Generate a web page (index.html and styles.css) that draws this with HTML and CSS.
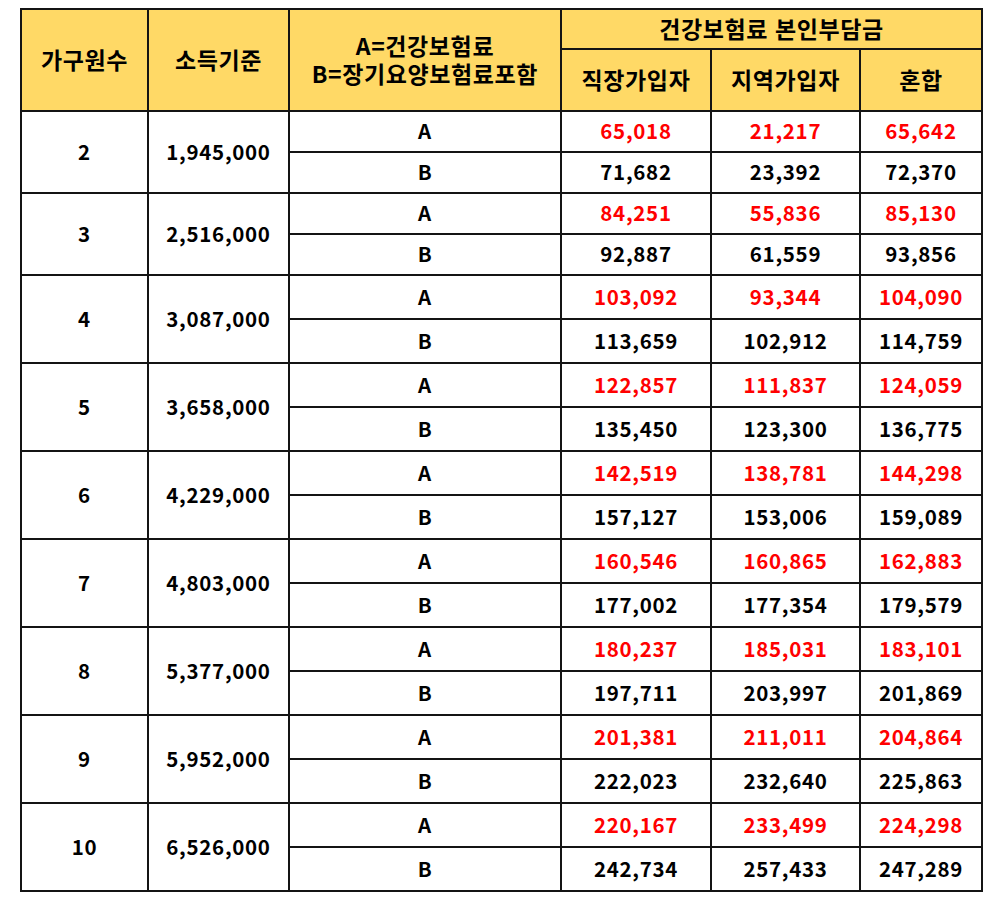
FILE: index.html
```html
<!DOCTYPE html>
<html lang="ko">
<head>
<meta charset="utf-8">
<link rel="stylesheet" href="styles.css">
</head>
<body>
<table class="tbl">
  <colgroup>
    <col class="c1"><col class="c2"><col class="c3"><col class="c4"><col class="c5"><col class="c6">
  </colgroup>
  <thead>
    <tr class="h1">
      <th rowspan="2">가구원수</th>
      <th rowspan="2">소득기준</th>
      <th rowspan="2">A=건강보험료<br>B=장기요양보험료포함</th>
      <th colspan="3">건강보험료 본인부담금</th>
    </tr>
    <tr class="h2">
      <th>직장가입자</th>
      <th>지역가입자</th>
      <th>혼합</th>
    </tr>
  </thead>
  <tbody>
    <tr class="s"><td rowspan="2">2</td><td rowspan="2">1,945,000</td><td>A</td><td class="red">65,018</td><td class="red">21,217</td><td class="red">65,642</td></tr>
    <tr class="s"><td>B</td><td>71,682</td><td>23,392</td><td>72,370</td></tr>
    <tr class="s"><td rowspan="2">3</td><td rowspan="2">2,516,000</td><td>A</td><td class="red">84,251</td><td class="red">55,836</td><td class="red">85,130</td></tr>
    <tr class="s"><td>B</td><td>92,887</td><td>61,559</td><td>93,856</td></tr>
    <tr><td rowspan="2">4</td><td rowspan="2">3,087,000</td><td>A</td><td class="red">103,092</td><td class="red">93,344</td><td class="red">104,090</td></tr>
    <tr><td>B</td><td>113,659</td><td>102,912</td><td>114,759</td></tr>
    <tr><td rowspan="2">5</td><td rowspan="2">3,658,000</td><td>A</td><td class="red">122,857</td><td class="red">111,837</td><td class="red">124,059</td></tr>
    <tr><td>B</td><td>135,450</td><td>123,300</td><td>136,775</td></tr>
    <tr><td rowspan="2">6</td><td rowspan="2">4,229,000</td><td>A</td><td class="red">142,519</td><td class="red">138,781</td><td class="red">144,298</td></tr>
    <tr><td>B</td><td>157,127</td><td>153,006</td><td>159,089</td></tr>
    <tr><td rowspan="2">7</td><td rowspan="2">4,803,000</td><td>A</td><td class="red">160,546</td><td class="red">160,865</td><td class="red">162,883</td></tr>
    <tr><td>B</td><td>177,002</td><td>177,354</td><td>179,579</td></tr>
    <tr><td rowspan="2">8</td><td rowspan="2">5,377,000</td><td>A</td><td class="red">180,237</td><td class="red">185,031</td><td class="red">183,101</td></tr>
    <tr><td>B</td><td>197,711</td><td>203,997</td><td>201,869</td></tr>
    <tr><td rowspan="2">9</td><td rowspan="2">5,952,000</td><td>A</td><td class="red">201,381</td><td class="red">211,011</td><td class="red">204,864</td></tr>
    <tr><td>B</td><td>222,023</td><td>232,640</td><td>225,863</td></tr>
    <tr><td rowspan="2">10</td><td rowspan="2">6,526,000</td><td>A</td><td class="red">220,167</td><td class="red">233,499</td><td class="red">224,298</td></tr>
    <tr><td>B</td><td>242,734</td><td>257,433</td><td>247,289</td></tr>
  </tbody>
</table>
</body>
</html>
```
FILE: styles.css
```css
html, body {
  margin: 0;
  padding: 0;
  background: #ffffff;
}
body {
  padding: 8px 0 0 20px;
}
.tbl {
  border-collapse: collapse;
  table-layout: fixed;
  width: 961px;
  font-family: "Noto Sans CJK KR", "Noto Sans", sans-serif;
  font-weight: 700;
  font-size: 20px;
  color: #000;
}
.c1 { width: 127px; }
.c2 { width: 141px; }
.c3 { width: 272px; }
.c4 { width: 150px; }
.c5 { width: 149px; }
.c6 { width: 122px; }
.tbl th, .tbl td {
  border: 2px solid #141414;
  text-align: center;
  vertical-align: middle;
  padding: 0 0 3px 0;
}
.tbl th {
  background: #ffd966;
  font-size: 23px;
  letter-spacing: 0.6px;
  line-height: 28px;
  font-weight: 700;
}
.h1 th { height: 35px; }
.h2 th { height: 57px; }
.tbl td { height: 39px; line-height: 24px; letter-spacing: 0.7px; font-size: 20.5px; }
.tbl tr.s td { height: 36px; }
.red { color: #ff0000; }
```
